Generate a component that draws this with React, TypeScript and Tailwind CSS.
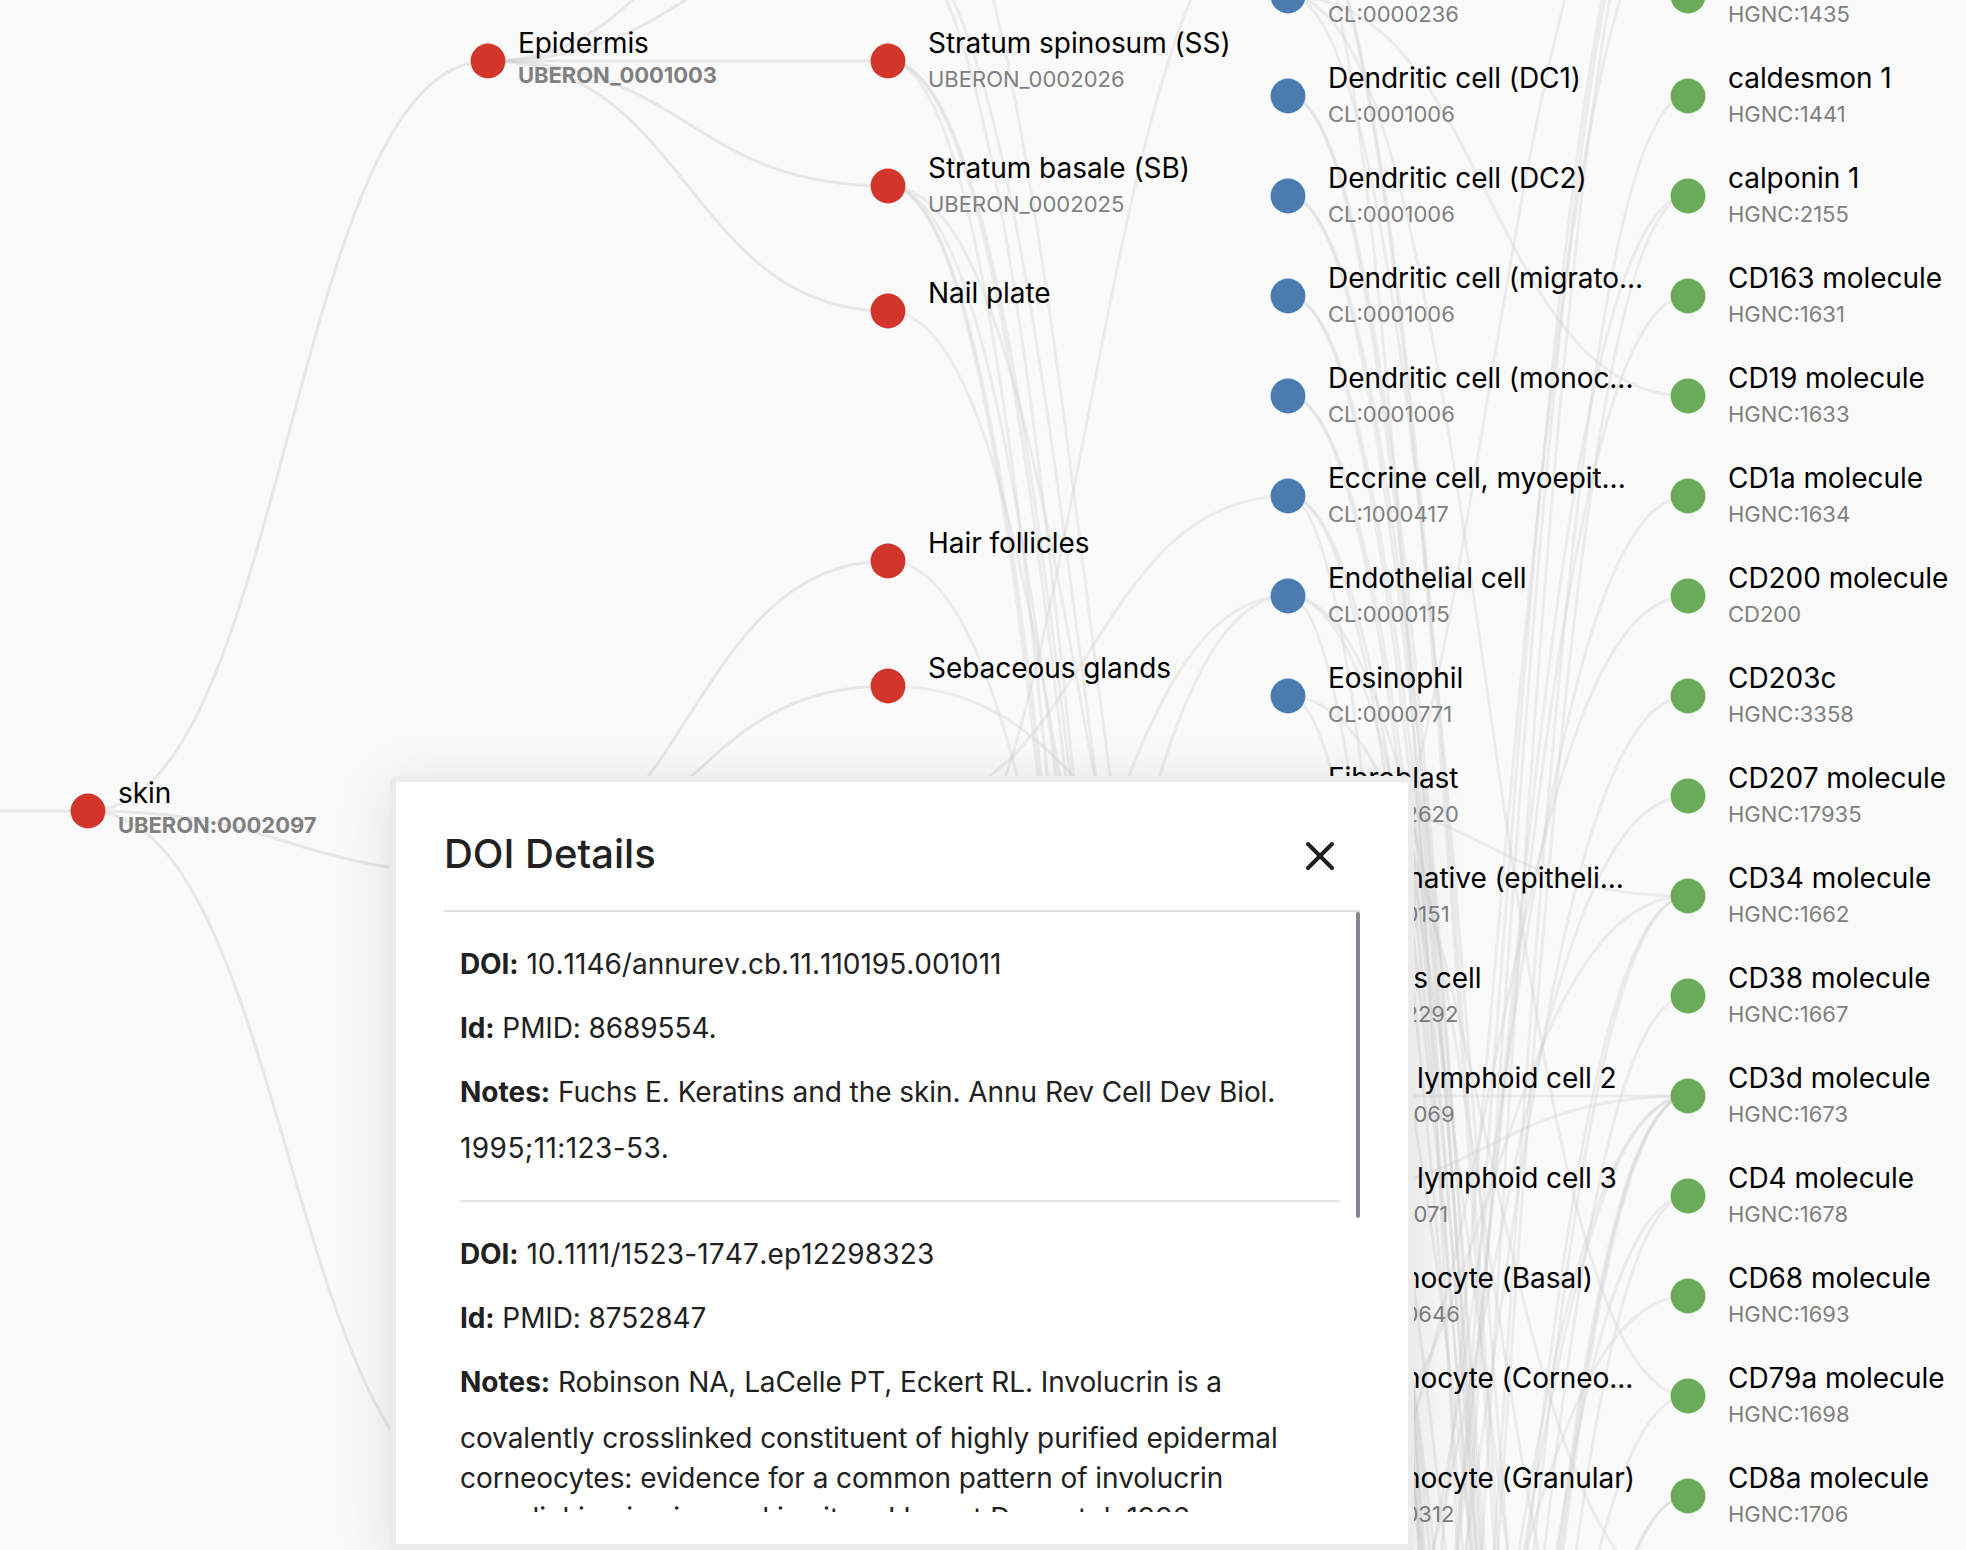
import React from "react";
import { X } from "lucide-react";

type GraphNode = {
  x: number;
  y: number;
  kind: "structure" | "cell" | "biomarker";
  label?: string;
  id?: string;
  parent?: boolean;
};

const COLORS = {
  structure: "#d1352b",
  cell: "#4a7cb2",
  biomarker: "#69ab59",
};

const structures: GraphNode[] = [
  { x: 88, y: 811, kind: "structure", label: "skin", id: "UBERON:0002097", parent: true },
  { x: 488, y: 61, kind: "structure", label: "Epidermis", id: "UBERON_0001003", parent: true },
  { x: 888, y: 61, kind: "structure", label: "Stratum spinosum (SS)", id: "UBERON_0002026" },
  { x: 888, y: 186, kind: "structure", label: "Stratum basale (SB)", id: "UBERON_0002025" },
  { x: 888, y: 311, kind: "structure", label: "Nail plate" },
  { x: 888, y: 561, kind: "structure", label: "Hair follicles" },
  { x: 888, y: 686, kind: "structure", label: "Sebaceous glands" },
];

const cellRows: [string, string][] = [
  ["", "CL:0000236"],
  ["Dendritic cell (DC1)", "CL:0001006"],
  ["Dendritic cell (DC2)", "CL:0001006"],
  ["Dendritic cell (migrato...", "CL:0001006"],
  ["Dendritic cell (monoc...", "CL:0001006"],
  ["Eccrine cell, myoepit...", "CL:1000417"],
  ["Endothelial cell", "CL:0000115"],
  ["Eosinophil", "CL:0000771"],
  ["Fibroblast", "CL:0002620"],
  ["Germinative (epitheli...", "CL:0000151"],
  ["Glomus cell", "CL:0002292"],
  ["Innate lymphoid cell 2", "CL:0001069"],
  ["Innate lymphoid cell 3", "CL:0001071"],
  ["Keratinocyte (Basal)", "CL:0000646"],
  ["Keratinocyte (Corneo...", ""],
  ["Keratinocyte (Granular)", "CL:0000312"],
];

const biomarkerRows: [string, string][] = [
  ["", "HGNC:1435"],
  ["caldesmon 1", "HGNC:1441"],
  ["calponin 1", "HGNC:2155"],
  ["CD163 molecule", "HGNC:1631"],
  ["CD19 molecule", "HGNC:1633"],
  ["CD1a molecule", "HGNC:1634"],
  ["CD200 molecule", "CD200"],
  ["CD203c", "HGNC:3358"],
  ["CD207 molecule", "HGNC:17935"],
  ["CD34 molecule", "HGNC:1662"],
  ["CD38 molecule", "HGNC:1667"],
  ["CD3d molecule", "HGNC:1673"],
  ["CD4 molecule", "HGNC:1678"],
  ["CD68 molecule", "HGNC:1693"],
  ["CD79a molecule", "HGNC:1698"],
  ["CD8a molecule", "HGNC:1706"],
];

const rowY = (i: number) => i * 100 - 4;

const nodes: GraphNode[] = [
  ...structures,
  ...cellRows.map(([label, id], i): GraphNode => ({ x: 1288, y: rowY(i), kind: "cell", label, id })),
  ...biomarkerRows.map(([label, id], i): GraphNode => ({ x: 1688, y: rowY(i), kind: "biomarker", label, id })),
];

// Tree edges: [x of source, y of source, y of target]
const treeLinks: [number, number, number][] = [
  [-312, 811, 811],
  [88, 811, 61],
  [88, 811, 873.5],
  [88, 811, 1498.5],
  [488, 61, -189],
  [488, 61, -64],
  [488, 61, 61],
  [488, 61, 186],
  [488, 61, 311],
  [488, 873.5, 561],
  [488, 873.5, 686],
];

// Structure to cell edges, as [source y, target y]
const cellLinks: [number, number][] = [
  [-189, 1396],
  [-64, 1496],
  [-64, 1896],
  [61, 1796],
  [61, 1896],
  [61, 2396],
  [186, 2296],
  [186, 2396],
  [186, 1896],
  [186, 1296],
  [311, 1596],
  [561, 1696],
  [686, 896],
  [936, -104],
  [811, 496],
  [1186, 596],
  [1561, 596],
];

// Cell to biomarker edges, as [source y, target y]
const biomarkerLinks: [number, number][] = [
  [-104, 2896],
  [-104, 2996],
  [-104, 4596],
  [-4, 396],
  [-4, 1396],
  [-4, 2596],
  [96, 3196],
  [96, 3396],
  [196, 2996],
  [196, 3196],
  [296, 2996],
  [296, 3196],
  [396, 2996],
  [396, 3196],
  [496, 5596],
  [496, 3296],
  [496, 2996],
  [596, 1896],
  [596, 2196],
  [596, 5496],
  [696, 1596],
  [696, 4996],
  [796, 896],
  [796, 2596],
  [796, 4296],
  [896, 3096],
  [896, 3696],
  [996, 3196],
  [996, -204],
  [1096, 1096],
  [1096, 3296],
  [1196, 1096],
  [1196, 3396],
  [1296, 3796],
  [1296, 2796],
  [1396, 2396],
  [1496, 896],
  [1596, 596],
  [1796, 796],
  [1896, 496],
  [2096, 696],
  [2096, 1296],
  [2196, -104],
  [2196, 296],
  [2296, 196],
  [2396, 1096],
  [2496, 1096],
  [2496, -204],
  [2696, -204],
  [2996, 896],
  [2996, 1196],
  [3096, -204],
  [3196, 96],
  [3196, 196],
  [3196, 896],
  [3296, 996],
  [3296, 1396],
  [3496, 1096],
  [3596, 1096],
  [3596, 1496],
  [3696, 1096],
  [3696, 1496],
  [3796, 1196],
];

const curve = (x: number, y1: number, y2: number) =>
  `M${x},${y1}C${x + 200},${y1} ${x + 200},${y2} ${x + 400},${y2}`;

function Graph() {
  return (
    <>
      <svg className="absolute inset-0" width={1966} height={1550} fill="none">
        <g stroke="#cccccc" strokeOpacity={0.4} strokeWidth={3}>
          {treeLinks.map(([x, a, b], i) => (
            <path key={i} d={curve(x, a, b)} />
          ))}
        </g>
        <g stroke="#cccccc" strokeOpacity={0.3} strokeWidth={3}>
          {cellLinks.map(([a, b], i) => (
            <path key={i} d={curve(888, a, b)} />
          ))}
          {biomarkerLinks.map(([a, b], i) => (
            <path key={i} d={curve(1288, a, b)} />
          ))}
        </g>
        {nodes.map((n, i) => (
          <circle key={i} cx={n.x} cy={n.y} r={17.4} fill={COLORS[n.kind]} />
        ))}
      </svg>
      {nodes.map((n, i) => (
        <div
          key={i}
          className="absolute flex flex-col whitespace-nowrap"
          style={{ left: n.x + (n.parent ? 30 : 40), top: n.y - 36.5 }}
        >
          <span className="h-9 text-[28px] leading-9 tracking-[-0.05px] text-black">{n.label}</span>
          {n.id && (
            <span
              className={
                n.parent
                  ? "text-[22px] leading-7 font-bold tracking-[-0.07px] text-[#808080]"
                  : "text-[22px] leading-9 text-[#808080]"
              }
            >
              {n.id}
            </span>
          )}
        </div>
      ))}
    </>
  );
}

type Line = { text: string; className: string };
type Reference = { doi: Line; id: string; notes: Line[] };

const prose = "tracking-[-0.06px]";

const references: Reference[] = [
  {
    doi: { text: "10.1146/annurev.cb.11.110195.001011", className: "[font-kerning:none]" },
    id: "PMID: 8689554.",
    notes: [
      { text: "Fuchs E. Keratins and the skin. Annu Rev Cell Dev Biol.", className: prose },
      { text: "1995;11:123-53.", className: "tracking-[0.42px]" },
    ],
  },
  {
    doi: { text: "10.1111/1523-1747.ep12298323", className: "tracking-[0.18px] [font-kerning:none]" },
    id: "PMID: 8752847",
    notes: [
      { text: "Robinson NA, LaCelle PT, Eckert RL. Involucrin is a", className: "tracking-[-0.09px]" },
      { text: "covalently crosslinked constituent of highly purified epidermal", className: prose },
      { text: "corneocytes: evidence for a common pattern of involucrin", className: prose },
      { text: "crosslinking in vivo and in situ.\u00a0 J Invest Dermatol. 1996", className: "" },
    ],
  },
];

function ReferenceItem({ item }: { item: Reference }) {
  const [first, ...rest] = item.notes;
  return (
    <div className="border-b-2 border-[#e4e4e4] pt-5 pb-8 whitespace-nowrap">
      <p className="leading-[64px]">
        <strong className="font-bold tracking-[-0.1px]">DOI:</strong>{" "}
        <span className={item.doi.className}>{item.doi.text}</span>
      </p>
      <p className="leading-[64px] tracking-[-0.1px]">
        <strong className="font-bold">Id:</strong> {item.id}
      </p>
      <p className="mb-1 leading-[64px]">
        <strong className="font-bold">Notes:</strong> <span className={first.className}>{first.text}</span>
      </p>
      {rest.map((line) => (
        <p key={line.text} className="leading-10">
          <span className={line.className}>{line.text}</span>
        </p>
      ))}
    </div>
  );
}

function DoiDialog() {
  return (
    <div className="absolute top-[776px] left-[390px] flex h-[774px] w-[1024px] flex-col rounded-lg border-[6px] border-[#ebebeb] bg-white px-12 pb-8 text-[#212121] shadow-[0_10px_56px_2px_rgba(0,0,0,0.11)]">
      <header className="flex h-[130px] shrink-0 items-center justify-between border-b-2 border-[#dee2e6] pt-4">
        <h2 className="text-[40px] leading-[48px] font-medium">DOI Details</h2>
        <button className="mt-[3px] mr-4 flex size-12 items-center justify-center" aria-label="Close">
          <X size={48} strokeWidth={2} />
        </button>
      </header>
      <div className="flex min-h-0 flex-1 justify-between overflow-hidden">
        <div className="ml-4 w-[880px] text-[28px]">
          {references.map((r) => (
            <ReferenceItem key={r.doi.text} item={r} />
          ))}
        </div>
        <div className="h-[306px] w-1 rounded-full bg-[#82868f]" />
      </div>
    </div>
  );
}

export default function App() {
  return (
    <main className="relative h-[1550px] w-[1966px] overflow-hidden bg-[#fafafa] font-['Inter',sans-serif]">
      <Graph />
      <DoiDialog />
    </main>
  );
}
